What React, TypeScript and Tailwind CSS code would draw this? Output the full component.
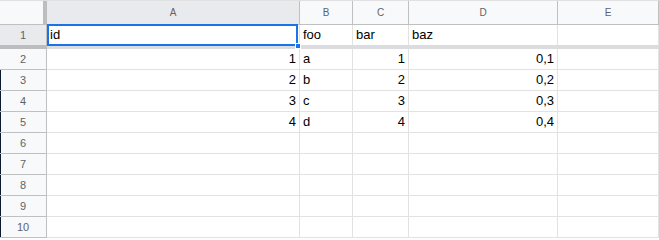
import React from "react";

const widths = [253, 53, 56, 149, 101];
const letters = ["A", "B", "C", "D", "E"];

type Cell = { t: string; r?: boolean };
const data: Cell[][] = [
  [{ t: "1", r: true }, { t: "a" }, { t: "1", r: true }, { t: "0,1", r: true }, { t: "" }],
  [{ t: "2", r: true }, { t: "b" }, { t: "2", r: true }, { t: "0,2", r: true }, { t: "" }],
  [{ t: "3", r: true }, { t: "c" }, { t: "3", r: true }, { t: "0,3", r: true }, { t: "" }],
  [{ t: "4", r: true }, { t: "d" }, { t: "4", r: true }, { t: "0,4", r: true }, { t: "" }],
];

export default function App() {
  const rows: Cell[][] = [];
  for (let i = 0; i < 9; i++) rows.push(data[i] ?? [{ t: "" }, { t: "" }, { t: "" }, { t: "" }, { t: "" }]);
  return (
    <div
      className="w-[659px] h-[240px] overflow-hidden bg-white text-black"
      style={{ fontFamily: '"Liberation Sans", Arial, sans-serif' }}
    >
      {/* column header row */}
      <div className="flex h-[25px] border-t border-[#e0e0e0]">
        <div className="w-[47px] shrink-0 bg-[#f8f9fa] border-r-4 border-b border-r-[#bdbdbd] border-b-[#c0c0c0]" />
        {letters.map((l, i) => (
          <div
            key={l}
            style={{ width: widths[i] }}
            className={`shrink-0 flex items-center justify-center text-[10px] text-[#5f6368] border-r border-b border-[#c0c0c0] ${
              i === 0 ? "bg-[#e8eaed]" : "bg-[#f8f9fa]"
            }`}
          >
            {l}
          </div>
        ))}
      </div>
      {/* row 1 (frozen) */}
      <div className="flex h-[20px]">
        <div className="w-[47px] shrink-0 bg-[#e8eaed] border-r border-[#c0c0c0] flex items-center justify-center text-[11px] text-[#5f6368]">
          1
        </div>
        {["id", "foo", "bar", "baz", ""].map((t, i) => (
          <div
            key={i}
            style={{ width: widths[i] }}
            className="shrink-0 relative flex items-center px-[3px] text-[13px] border-r border-[#e2e2e2]"
          >
            {t}
            {i === 0 && (
              <div className="absolute left-0 right-[1px] top-[-1px] bottom-[-1px] border-2 border-[#1a73e8] pointer-events-none">
                <div className="absolute right-[-5px] bottom-[-5px] w-[6px] h-[6px] bg-[#1a73e8] border border-white" />
              </div>
            )}
          </div>
        ))}
      </div>
      {/* freeze bar */}
      <div className="flex h-[4px]">
        <div className="w-[47px] shrink-0 bg-[#bdbdbd]" />
        <div className="flex-1 bg-[#dadce0]" />
      </div>
      {rows.map((r, ri) => (
        <div key={ri} className="flex h-[21px]">
          <div
            className={`w-[47px] shrink-0 bg-[#f8f9fa] border-r border-b border-[#c0c0c0] flex items-center justify-center text-[11px] text-[#5f6368] ${
              ri >= 1 ? "shadow-[inset_1px_0_0_#0b1a30]" : ""
            }`}
          >
            {ri + 2}
          </div>
          {r.map((c, ci) => (
            <div
              key={ci}
              style={{ width: widths[ci] }}
              className={`shrink-0 flex items-center px-[3px] text-[13px] border-r border-b border-[#e2e2e2] ${
                c.r ? "justify-end" : "justify-start"
              }`}
            >
              {c.t}
            </div>
          ))}
        </div>
      ))}
    </div>
  );
}
